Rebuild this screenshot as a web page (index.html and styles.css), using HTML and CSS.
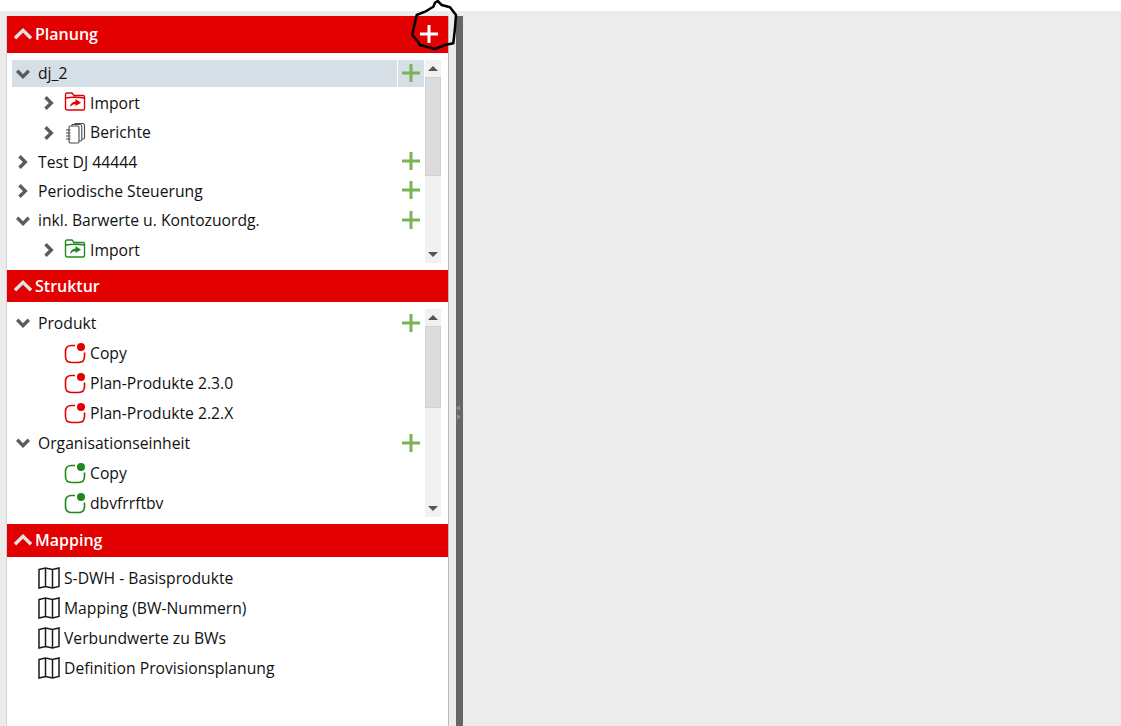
FILE: index.html
```html
<!DOCTYPE html>
<html lang="de">
<head>
<meta charset="utf-8">
<title>Planung</title>
<link rel="stylesheet" href="styles.css">
</head>
<body>
<svg width="0" height="0" class="defs">
  <defs>
    <symbol id="down" viewBox="0 0 14 10"><path d="M1.200 1.800 7 7.600 12.800 1.800" fill="none" stroke="currentColor" stroke-width="3.400"/></symbol>
    <symbol id="right" viewBox="0 0 10 14"><path d="M1.500 1.200 7.300 7 1.500 12.800" fill="none" stroke="currentColor" stroke-width="3.400"/></symbol>
    <symbol id="up" viewBox="0 0 18 12"><path d="M1 10.200 9 2.400 17 10.200" fill="none" stroke="currentColor" stroke-width="3.400"/></symbol>
    <symbol id="plus" viewBox="0 0 18 18"><path d="M9 0V18M0 9H18" fill="none" stroke="currentColor" stroke-width="3"/></symbol>
    <symbol id="folder" viewBox="0 0 22 22"><path d="M1.500 6V2.500Q1.500 1 3 1H8L10 3.500H19Q20.500 3.500 20.500 5V16.500Q20.500 18 19 18H3.500Q1.500 18 1.500 16V6Q10 4.500 20.500 6" fill="none" stroke="currentColor" stroke-width="1.400"/><path d="M6 15Q6.500 10 11.500 9.500V7L17 10.800 11.500 14V12Q8.500 12 6 15Z" fill="currentColor"/></symbol>
    <symbol id="book" viewBox="0 0 22 22"><path d="M5 5.500Q5 4 6.500 4H13.500Q15 4 15 5.500V19.500Q15 21 13.500 21H6.500Q5 21 5 19.500ZM8 4V3Q8 2.500 9 2.500H16Q17.800 2.500 17.800 4.500V17.500Q17.800 19 16.500 19H15M11 2.500V1.500H18.500Q20.500 1.500 20.500 3.500V15.500Q20.500 17 19 17H17.800" fill="none" stroke="#4a4a4a" stroke-width="1.100"/><path d="M2 8H6.500M2 11H6.500M2 14H6.500M2 17H6.500" stroke="#4a4a4a" stroke-width="1.200"/></symbol>
    <symbol id="product" viewBox="0 0 22 22"><path d="M11 3.500H7.500Q1.500 3.500 1.500 9.500V14.500Q1.500 20.500 7.500 20.500H14.500Q20.500 20.500 20.500 14.500V10.500" fill="none" stroke="currentColor" stroke-width="1.600"/><circle cx="17" cy="5" r="4" fill="currentColor"/></symbol>
    <symbol id="map" viewBox="0 0 22 22"><path d="M1 2.500 7.500 1 14.500 2.500 21 1V19.500L14.500 21 7.500 19.500 1 21ZM7.500 1V19.500M14.500 2.500V21" fill="none" stroke="#1a1a1a" stroke-width="1.500"/></symbol>
  </defs>
</svg>
<div class="page">
  <main class="panel">
    <section>
      <header class="head head-a">
        <svg class="up"><use href="#up"/></svg><span class="title">Planung</span>
        <svg class="add-main"><use href="#plus"/></svg>
      </header>
      <div class="tree tree-a">
        <div class="rows rows-a">
          <div class="row selected"><span class="name"><svg class="cv-d"><use href="#down"/></svg>dj_2</span><span class="add"><svg class="plus"><use href="#plus"/></svg></span></div>
          <div class="row sub"><span class="name"><svg class="cv-r"><use href="#right"/></svg><svg class="ic red"><use href="#folder"/></svg>Import</span></div>
          <div class="row sub"><span class="name"><svg class="cv-r"><use href="#right"/></svg><svg class="ic"><use href="#book"/></svg>Berichte</span></div>
          <div class="row"><span class="name"><svg class="cv-r top"><use href="#right"/></svg>Test DJ 44444</span><span class="add"><svg class="plus"><use href="#plus"/></svg></span></div>
          <div class="row"><span class="name"><svg class="cv-r top"><use href="#right"/></svg>Periodische Steuerung</span><span class="add"><svg class="plus"><use href="#plus"/></svg></span></div>
          <div class="row"><span class="name"><svg class="cv-d"><use href="#down"/></svg>inkl. Barwerte u. Kontozuordg.</span><span class="add"><svg class="plus"><use href="#plus"/></svg></span></div>
          <div class="row sub"><span class="name"><svg class="cv-r"><use href="#right"/></svg><svg class="ic green"><use href="#folder"/></svg>Import</span></div>
        </div>
        <div class="scroll"><span class="arrow-up"></span><span class="thumb thumb-a"></span><span class="arrow-down"></span></div>
      </div>
    </section>
    <section>
      <header class="head head-b">
        <svg class="up"><use href="#up"/></svg><span class="title">Struktur</span>
      </header>
      <div class="tree tree-b">
        <div class="rows rows-b">
          <div class="row"><span class="name"><svg class="cv-d"><use href="#down"/></svg>Produkt</span><span class="add"><svg class="plus"><use href="#plus"/></svg></span></div>
          <div class="row leaf"><span class="name"><svg class="ic red"><use href="#product"/></svg>Copy</span></div>
          <div class="row leaf"><span class="name"><svg class="ic red"><use href="#product"/></svg>Plan-Produkte 2.3.0</span></div>
          <div class="row leaf"><span class="name"><svg class="ic red"><use href="#product"/></svg>Plan-Produkte 2.2.X</span></div>
          <div class="row"><span class="name"><svg class="cv-d"><use href="#down"/></svg>Organisationseinheit</span><span class="add"><svg class="plus"><use href="#plus"/></svg></span></div>
          <div class="row leaf"><span class="name"><svg class="ic green"><use href="#product"/></svg>Copy</span></div>
          <div class="row leaf"><span class="name"><svg class="ic green"><use href="#product"/></svg>dbvfrrftbv</span></div>
        </div>
        <div class="scroll"><span class="arrow-up"></span><span class="thumb thumb-b"></span><span class="arrow-down"></span></div>
      </div>
    </section>
    <section>
      <header class="head head-c">
        <svg class="up"><use href="#up"/></svg><span class="title">Mapping</span>
      </header>
      <div class="rows rows-c">
        <div class="row"><span class="name"><svg class="ic"><use href="#map"/></svg>S-DWH - Basisprodukte</span></div>
        <div class="row"><span class="name"><svg class="ic"><use href="#map"/></svg>Mapping (BW-Nummern)</span></div>
        <div class="row"><span class="name"><svg class="ic"><use href="#map"/></svg>Verbundwerte zu BWs</span></div>
        <div class="row"><span class="name"><svg class="ic"><use href="#map"/></svg>Definition Provisionsplanung</span></div>
      </div>
    </section>
  </main>
  <div class="gap"></div>
  <div class="splitter"><span class="grip-l"></span><span class="grip-r"></span></div>
  <div class="content"></div>
</div>
<svg class="scribble" viewBox="0 0 60 56" width="60" height="56"><path d="M30 2.700 32.700 1 36.700 5 45 7.300 51 15 50 28 48.300 43.300 40 45 30 49 15 45 13 41.700 7.300 35 9 26.700 11.700 15 20 11.700 28.300 6.700Z" fill="none" stroke="#000" stroke-width="2.500" stroke-linejoin="round"/></svg>
</body>
</html>
```
FILE: styles.css
```css
* { box-sizing: border-box; }
html, body { margin: 0; height: 100%; overflow: hidden; }
body {
  font-family: "Open Sans", sans-serif;
  font-size: 16px;
  color: #111;
  background: #fff;
  position: relative;
}
.defs { position: absolute; }
.page {
  display: flex;
  height: 715px;
  margin-top: 11px;
  padding-top: 5px;
  background: #ececec;
  align-items: stretch;
}
.panel {
  width: 443px;
  margin-left: 6px;
  background: #fff;
  border-left: 1px solid #d4d4d4;
  border-right: 1px solid #bdbdbd;
}
.gap { width: 7px; }
.splitter {
  width: 7px;
  background: #666;
  position: relative;
}
.grip-l, .grip-r {
  position: absolute;
  left: 0;
  border-style: solid;
  border-color: transparent;
}
.grip-l { top: 389px; border-width: 3px 4px 3px 0; border-right-color: #8c8c8c; }
.grip-r { top: 398px; left: 1px; border-width: 3px 0 3px 4px; border-left-color: #8c8c8c; }
.content { flex: 1; background: #ececec; }

.head {
  background: #e30000;
  color: #fff;
  display: flex;
  align-items: center;
  padding-left: 7px;
  font-weight: 600;
  position: relative;
  line-height: 22px;
}
.head-a { height: 37px; padding-bottom: 2px; }
.head-b { height: 32px; }
.head-c { height: 33px; padding-bottom: 2px; }
.title { margin-left: 3px; }
.up { width: 18px; height: 12px; color: #dfe3e8; }
.add-main { width: 18px; height: 18px; color: #fff; position: absolute; left: 413px; top: 9px; }

.tree { display: flex; padding-right: 7px; overflow: hidden; }
.tree-a { height: 217px; padding-top: 7px; padding-bottom: 7px; }
.tree-b { height: 222px; padding-top: 7px; padding-bottom: 7px; }
.rows { flex: 1; min-width: 0; padding-left: 5px; font-size: 15.7px; }
.rows-a { padding-top: 0.2px; }
.rows-a .row { margin-bottom: 2.45px; }
.rows-a .plus { margin-bottom: 2px; }
.rows-b { padding-top: 0.5px; }
.rows-b .row { margin-bottom: 3px; }
.rows-c .row { margin-bottom: 3px; }
.rows-c { padding: 7px 5px 0; }
.rows-c .name { padding-bottom: 0; }
.rows-c .name svg { top: 0; }
.rows-c .ic { margin-left: 26px; }

.row { height: 27px; display: flex; gap: 1px; align-items: stretch; }
.name { flex: 1; display: flex; align-items: center; white-space: nowrap; min-width: 0; line-height: 22px; padding-bottom: 1px; }
.name svg { position: relative; top: 0.5px; }
.add { width: 26px; display: flex; align-items: center; justify-content: center; }
.selected .name, .selected .add { background: #d6dee6; }
.plus { width: 18px; height: 18px; color: #78b354; }
.cv-d { width: 14px; height: 10px; color: #5c5c5c; margin: 0 8px 0 4px; flex: none; }
.cv-r { width: 10px; height: 14px; color: #5c5c5c; margin-left: 32px; margin-right: 10px; flex: none; }
.cv-r.top { margin-left: 6px; margin-right: 10px; }
.ic { width: 22px; height: 22px; margin-right: 4px; flex: none; }
.leaf .ic { margin-left: 52px; }
.red { color: #e30000; }
.green { color: #1e8a1e; }

.scroll {
  width: 16px;
  margin-left: 1px;
  background: #f1f1f1;
  display: flex;
  flex-direction: column;
  align-items: center;
  flex: none;
}
.arrow-up, .arrow-down { width: 0; height: 0; border-style: solid; border-color: transparent; flex: none; }
.arrow-up { border-width: 0 5px 5px; border-bottom-color: #555; margin: 6px 0; }
.arrow-down { border-width: 5px 5px 0; border-top-color: #555; margin-top: auto; margin-bottom: 6px; }
.thumb { width: 16px; background: #dcdcdc; border: 1px solid #d2d2d2; flex: none; }
.thumb-a { height: 99px; }
.thumb-b { height: 82px; }

.scribble { position: absolute; left: 405px; top: 0; }
```
